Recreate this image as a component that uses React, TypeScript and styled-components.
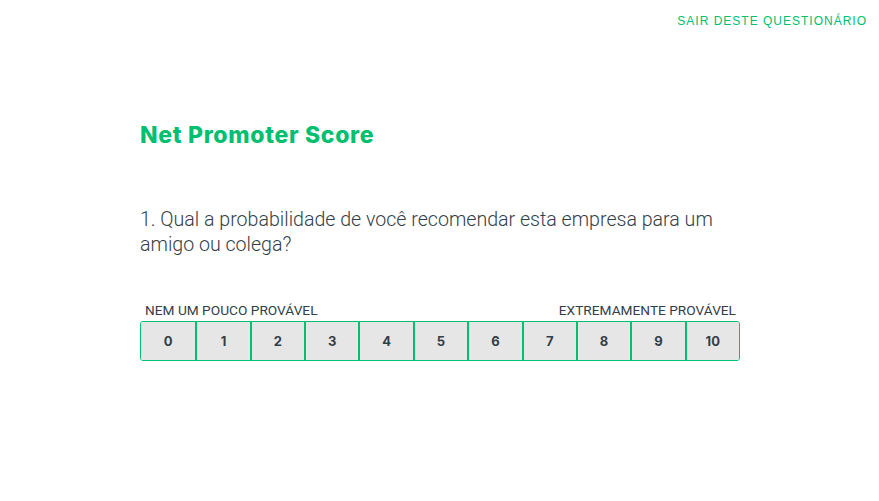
import React, { useState } from 'react';
import styled, { createGlobalStyle } from 'styled-components';

const GREEN = '#00bf6f';

const GlobalStyle = createGlobalStyle`
  html, body {
    margin: 0;
    padding: 0;
    background: #ffffff;
  }
  body {
    font-family: 'Roboto', 'Liberation Sans', sans-serif;
  }
`;

const App: React.FC = () => {
  const [selected, setSelected] = useState<number | null>(null);

  return (
    <Page>
      <GlobalStyle />
      <TopBar>
        <ExitLink href="#">SAIR DESTE QUESTIONÁRIO</ExitLink>
      </TopBar>
      <Content>
        <Title>Net Promoter Score</Title>
        <Question>
          1. Qual a probabilidade de você recomendar esta empresa para um amigo ou colega?
        </Question>
        <ScaleLabels>
          <ScaleLabel>NEM UM POUCO PROVÁVEL</ScaleLabel>
          <ScaleLabel>EXTREMAMENTE PROVÁVEL</ScaleLabel>
        </ScaleLabels>
        <Scale>
          {Array.from({ length: 11 }, (_, i) => (
            <ScaleCell
              key={i}
              $active={selected === i}
              onClick={() => setSelected(i)}
            >
              {i}
            </ScaleCell>
          ))}
        </Scale>
      </Content>
    </Page>
  );
};

export default App;

const Page = styled.div`
  width: 879px;
  height: 501px;
  display: flex;
  flex-direction: column;
`;

const TopBar = styled.div`
  display: flex;
  justify-content: flex-end;
  padding: 14px 12px 0 0;
  height: 21px;
`;

const ExitLink = styled.a`
  font-family: 'Liberation Sans', Arial, sans-serif;
  font-size: 12px;
  letter-spacing: 1px;
  color: ${GREEN};
  text-decoration: none;
`;

const Content = styled.div`
  width: 600px;
  margin: 0 auto 0 140px;
  display: flex;
  flex-direction: column;
`;

const Title = styled.h1`
  margin: 85px 0 0;
  font-family: 'Inter', 'Roboto', sans-serif;
  font-weight: 800;
  font-size: 23px;
  letter-spacing: 0.68px;
  line-height: 30px;
  color: ${GREEN};
`;

const Question = styled.p`
  margin: 57px 0 0;
  font-family: 'Roboto', 'Liberation Sans', sans-serif;
  font-weight: 300;
  font-size: 19.6px;
  line-height: 25px;
  color: #333e48;
`;

const ScaleLabels = styled.div`
  display: flex;
  justify-content: space-between;
  margin-top: 44px;
  padding: 0 4px 0 5px;
`;

const ScaleLabel = styled.span`
  font-family: 'Roboto', 'Liberation Sans', sans-serif;
  font-size: 13.7px;
  line-height: 19px;
  color: #333e48;
`;

const Scale = styled.div`
  display: grid;
  grid-template-columns: repeat(11, 1fr);
  height: 40px;
  margin-top: 1px;
  border: 1px solid ${GREEN};
  border-radius: 3px;
  overflow: hidden;
  box-sizing: border-box;
`;

const ScaleCell = styled.button<{ $active: boolean }>`
  border: none;
  border-left: 2px solid ${GREEN};
  background: ${({ $active }) => ($active ? GREEN : '#e6e6e6')};
  color: ${({ $active }) => ($active ? '#fff' : '#333e48')};
  font-family: 'Inter', 'Roboto', sans-serif;
  font-weight: 700;
  font-size: 13px;
  cursor: pointer;
  padding: 0;

  &:first-child {
    border-left: none;
  }
`;
